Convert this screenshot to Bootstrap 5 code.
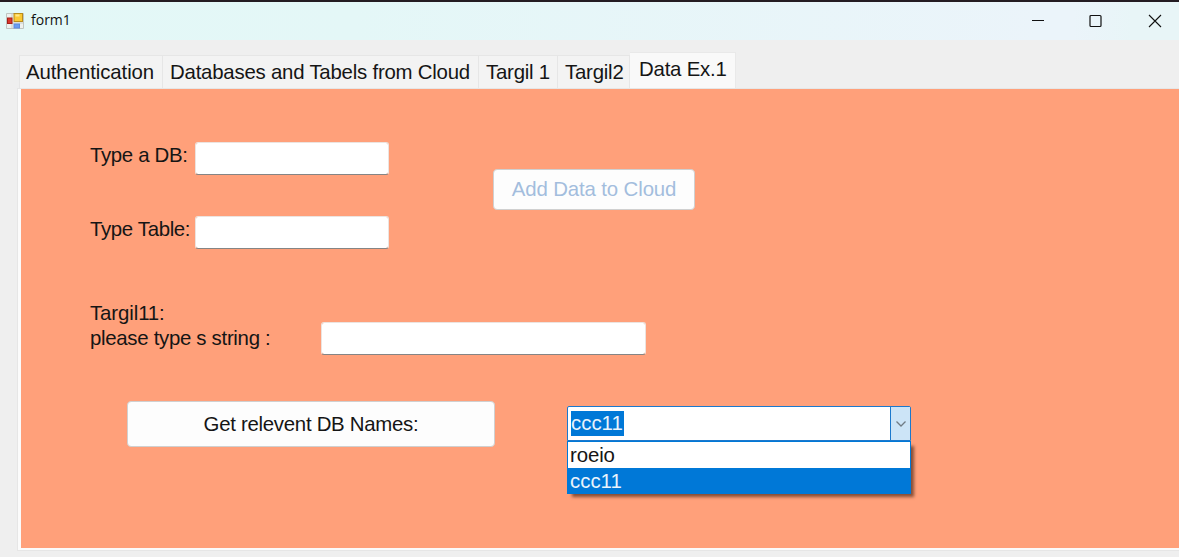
<!DOCTYPE html>
<html lang="en">
<head>
<meta charset="utf-8">
<meta name="viewport" content="width=device-width, initial-scale=1">
<title>form1</title>
<link href="https://cdn.jsdelivr.net/npm/bootstrap@5.3.0/dist/css/bootstrap.min.css" rel="stylesheet">
<style>
body{height:557px;background:#efefef;font-family:"Liberation Sans",Arial,sans-serif;font-size:20.4px;line-height:25px;color:#151515}
.titlebar{height:40px;border-top:2px solid #241c22;background:linear-gradient(90deg,#e3f8f7 0,#e4f7f7 30%,#ebf4fa 88%,#ebf4fa 91%,#e8f5f7 96%)}
.titlebar span{font-family:"Open Sans","Noto Sans",sans-serif;font-size:14px;line-height:20px;color:#111;margin:0 0 2px 1px}
.winbtn{width:58.5px}
.form-tabs{height:48px;padding-left:19px}
.form-tabs .nav-link{height:33px;padding:4px 0 0 7px;border:1px solid #e6e6e6;border-bottom:0;border-radius:0;margin:0;background:#f3f3f3;color:#151515;white-space:nowrap;letter-spacing:-.22px}
.form-tabs .nav-link+.nav-link{border-left:0}
.form-tabs .nav-link.active{height:36px;padding-left:9px;background:#f9f9f9;color:#151515;border-color:#e9e9e9}
.form-tabs .w-auth{width:144px;padding-left:6px;letter-spacing:-.08px}.w-cloud{width:316px}.w-one{width:79px}.w-two{width:72px}.w-data{width:106px}
.pane{margin-left:17px;height:463px;border:1px solid #e6e6e6;border-right:0;background:#fbfbfb;padding:0 0 2px 3px}
.canvas{height:459px;background:#ffa07a;padding:53px 0 0 69px}
.canvas .form-control{height:33px;border:1px solid #ece4e0;border-bottom:1px solid #858585;border-radius:3px;padding:0 6px}
.fields{gap:41px}
.fields label{width:105px;padding-top:1px;letter-spacing:-.34px}
.fields .form-control{width:194px}
.canvas .btn{font-size:20.4px;line-height:25px;border:1px solid #d0d0d0;border-radius:4px;background:#fdfdfd;color:#151515;padding:0;white-space:nowrap;letter-spacing:-.28px}
.canvas .btn-add{width:202px;height:41px;margin:27px 0 0 104px;color:#a3bddd;opacity:1;letter-spacing:-.12px}
.query{margin-top:52px}
.query label{width:231px;letter-spacing:-.3px}
.query .form-control{width:325px;margin-top:21px}
.query .heading{letter-spacing:-.1px}
.actions{margin:46px 0 0 37px}
.canvas .btn-get{width:368px;height:46px;padding-top:1px}
.combo{width:344px;margin:5px 0 0 72px}
.combo-box{height:35px;border:1px solid #1c78cc;border-radius:2px 2px 0 0;background:#fff;padding-left:3px}
.picked{height:25px;background:#0078d7;color:#e9f3fc;padding-right:1px}
.arrow{width:20px;background:#cce4f7;border-left:1px solid #1c78cc}
.options{border:1px solid #0078d7;border-radius:0;background:#fff;box-shadow:4px 4px 3px -1px rgba(70,35,20,.65)}
.options .list-group-item{height:26px;border:0;border-radius:0;padding:0 0 0 2px;color:#151515;line-height:26px;letter-spacing:-.1px}
.options .list-group-item.active{background:#0078d7;color:#e9f3fc;height:25px;line-height:26px;margin:0;letter-spacing:0}
</style>
<script src="https://cdn.jsdelivr.net/npm/bootstrap@5.3.0/dist/js/bootstrap.bundle.min.js"></script>
</head>
<body class="overflow-hidden">
<header class="titlebar d-flex align-items-center">
  <svg class="ms-1 flex-shrink-0" width="22" height="20" viewBox="0 0 22 20">
    <path d="M2.500 2.500h17v15h-17z" fill="#eef1ee" stroke="#bfc5c2"/>
    <path d="M8 3v14M3 12h16" stroke="#c6cbc8"/>
    <rect x="3.500" y="7" width="4.500" height="5.500" fill="#d9362c" stroke="#a62019"/>
    <rect x="10" y="2.500" width="8.500" height="8" fill="#fbc934" stroke="#b98d1c"/>
    <path d="M11.500 4.500h4" stroke="#ffe88c" stroke-width="2"/>
    <rect x="10" y="13" width="5.500" height="4" fill="#6b9df0" stroke="#5c8ae0"/>
  </svg>
  <span class="ps-1">form1</span>
  <div class="d-flex ms-auto" style="margin-right:-5px">
    <svg class="winbtn" height="14" viewBox="0 0 58.5 14"><path d="M23 6.500h12" stroke="#111"/></svg>
    <svg class="winbtn" height="14" viewBox="0 0 58.5 14"><rect x="23" y="1.500" width="11" height="11" rx="1" fill="none" stroke="#111" stroke-width="1.2"/></svg>
    <svg class="winbtn" height="14" viewBox="0 0 58.5 14"><path d="M23 1l12 12M35 1L23 13" stroke="#111" stroke-width="1.1"/></svg>
  </div>
</header>
<nav class="form-tabs nav flex-nowrap align-items-end">
  <a class="nav-link w-auth">Authentication</a>
  <a class="nav-link w-cloud">Databases and Tabels from Cloud</a>
  <a class="nav-link w-one">Targil 1</a>
  <a class="nav-link w-two">Targil2</a>
  <a class="nav-link w-data active">Data Ex.1</a>
</nav>
<main class="pane">
  <div class="canvas">
    <div class="d-flex align-items-start">
      <div class="fields d-flex flex-column">
        <div class="d-flex"><label for="db">Type a DB:</label><input id="db" class="form-control"></div>
        <div class="d-flex"><label for="table">Type Table:</label><input id="table" class="form-control"></div>
      </div>
      <button class="btn btn-add" disabled>Add Data to Cloud</button>
    </div>
    <div class="query d-flex align-items-start">
      <label for="str"><span class="heading">Targil11:</span><br>please type s string :</label>
      <input id="str" class="form-control">
    </div>
    <div class="actions d-flex align-items-start">
      <button class="btn btn-get">Get relevent DB Names:</button>
      <div class="combo">
        <div class="combo-box d-flex align-items-center">
          <span class="picked">ccc11</span>
          <div class="arrow ms-auto h-100 d-flex align-items-center justify-content-center">
            <svg width="12" height="8" viewBox="0 0 12 8"><path d="M1.500 1.500L6 6l4.500-4.500" fill="none" stroke="#707b84" stroke-width="1.3"/></svg>
          </div>
        </div>
        <div class="options list-group">
          <div class="list-group-item">roeio</div>
          <div class="list-group-item active">ccc11</div>
        </div>
      </div>
    </div>
  </div>
</main>
</body>
</html>
